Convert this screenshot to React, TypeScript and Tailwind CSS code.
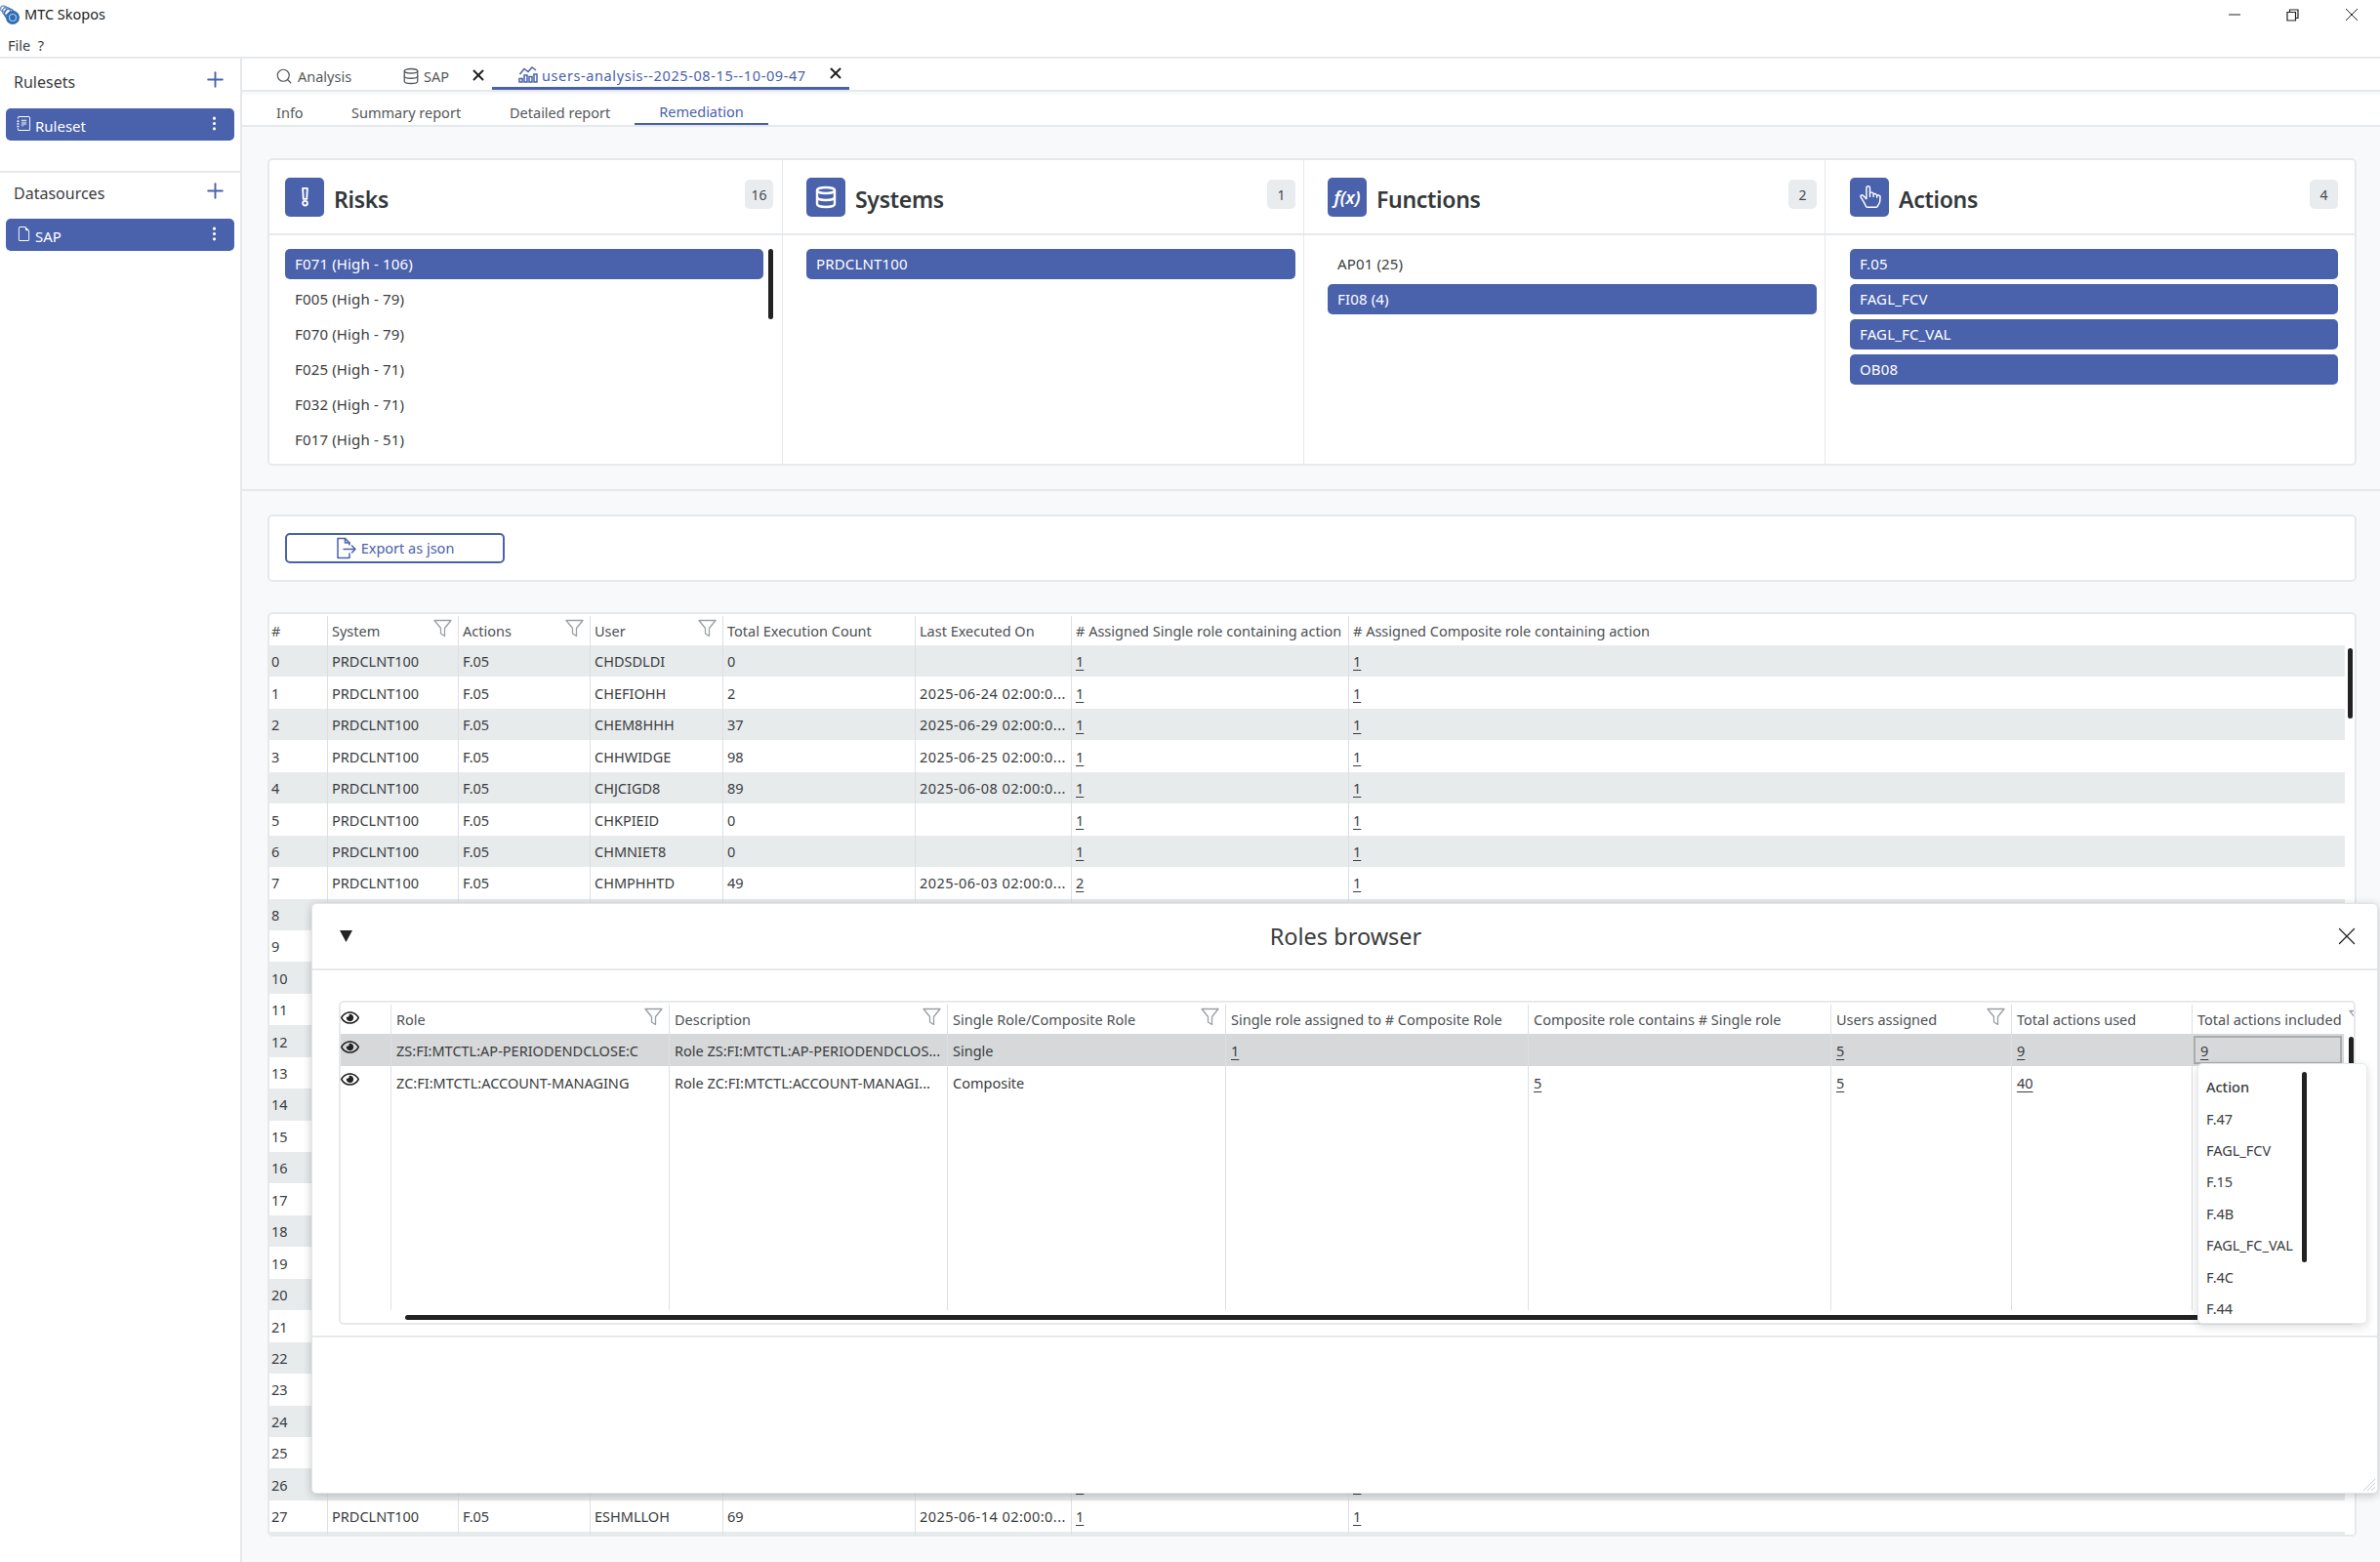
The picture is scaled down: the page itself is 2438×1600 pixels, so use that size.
import { Database, Plus, Search, X } from "lucide-react";
import { BsFileEarmark, BsHandIndexThumb, BsJournalText, BsThreeDotsVertical } from "react-icons/bs";
import { FaRegEye } from "react-icons/fa";

const rows: Record<number, string[]> = {
  0: ["CHDSDLDI", "0", "", "1", "1"],
  1: ["CHEFIOHH", "2", "2025-06-24 02:00:0...", "1", "1"],
  2: ["CHEM8HHH", "37", "2025-06-29 02:00:0...", "1", "1"],
  3: ["CHHWIDGE", "98", "2025-06-25 02:00:0...", "1", "1"],
  4: ["CHJCIGD8", "89", "2025-06-08 02:00:0...", "1", "1"],
  5: ["CHKPIEID", "0", "", "1", "1"],
  6: ["CHMNIET8", "0", "", "1", "1"],
  7: ["CHMPHHTD", "49", "2025-06-03 02:00:0...", "2", "1"],
  26: ["", "", "", "1", "1"],
  27: ["ESHMLLOH", "69", "2025-06-14 02:00:0...", "1", "1"],
};

const mainCols = "grid w-[2126px] grid-cols-[59px_134px_135px_136px_197px_160px_284px_1021px]";
const roleCols = "grid w-[2052px] grid-cols-[51px_285px_285px_285px_310px_310px_185px_185px_156px] [&>div+div]:pl-[5px]";

function Funnel() {
  return (
    <svg width="19" height="19" viewBox="0 0 19 19" fill="none" stroke="#9aa0a4" strokeWidth="1.3" strokeLinejoin="round" className="shrink-0">
      <path d="M1 1.5H18L11.5 9.5V17.5L7.5 15V9.5Z" />
    </svg>
  );
}

function Logo() {
  return (
    <svg width="22" height="22" viewBox="0 0 22 22" className="shrink-0">
      <circle cx="3.5" cy="5" r="3" fill="none" stroke="#7d9cc9" strokeWidth="1.4" />
      <circle cx="6.5" cy="7.5" r="4" fill="none" stroke="#5b83bd" strokeWidth="1.4" />
      <circle cx="9.5" cy="10" r="5" fill="none" stroke="#3d6fb4" strokeWidth="1.4" />
      <circle cx="13" cy="14" r="7" fill="#2f6db5" />
      <circle cx="13" cy="14" r="3.5" fill="none" stroke="#a9cbe9" strokeWidth="1.2" />
    </svg>
  );
}

function ChartIcon() {
  return (
    <svg width="20" height="18" viewBox="0 0 20 18" fill="none" stroke="#4a61ac" strokeWidth="1.5" className="mt-[3px] shrink-0">
      <path d="M1.5 9L6 3.5L10 6.5L14 2L18 5" />
      <rect x="1" y="13.5" width="3" height="3.5" />
      <rect x="6" y="10" width="3" height="7" />
      <rect x="11" y="11.5" width="3" height="5.5" />
      <rect x="16" y="9" width="3" height="8" />
    </svg>
  );
}

function ExportIcon() {
  return (
    <svg width="21" height="23" viewBox="0 0 21 23" fill="none" stroke="#4a61ac" strokeWidth="1.5" strokeLinejoin="round" strokeLinecap="round" className="shrink-0">
      <path d="M14 8V6L9.5 1.5H2V21.5H14V17" />
      <path d="M9.5 1.5V6H14" />
      <path d="M8 12.5H20M16.5 9L20 12.5L16.5 16" />
    </svg>
  );
}

function RiskIcon() {
  return (
    <svg width="11" height="21" viewBox="0 0 14 26" fill="none" stroke="white" strokeWidth="2.4">
      <path d="M4 2H10L9.2 16H4.8Z" strokeLinejoin="round" />
      <circle cx="7" cy="21.5" r="3" />
    </svg>
  );
}

function SideItem({ icon, label }: { icon: React.ReactNode; label: string }) {
  return (
    <div className="mx-[6px] flex h-[33px] items-center rounded-[5px] bg-[#4a61ac] pl-[11px] pr-[12px] text-[15px] text-white">
      <span className="mb-[3px] w-[19px]">{icon}</span>
      <span className="flex-1 pt-[3px]">{label}</span>
      <BsThreeDotsVertical size={17} className="mb-[3px]" />
    </div>
  );
}

function ListItem({ label, active }: { label: string; active?: boolean }) {
  return (
    <div className={active ? "flex h-[31px] items-center rounded-[5px] bg-[#4a61ac] pl-[10px] text-[15px] tracking-[0.15px] text-white" : "flex h-[31px] items-center pl-[10px] text-[15px] tracking-[0.15px] text-[#3a3d40]"}>
      {label}
    </div>
  );
}

function PanelHead({ icon, title, count, pad }: { icon: React.ReactNode; title: string; count: string; pad: string }) {
  return (
    <div className={`flex h-[77px] items-center border-b-2 border-[#e6e9eb] ${pad}`}>
      <div className="flex h-[40px] w-[40px] shrink-0 items-center justify-center rounded-[5px] bg-[#4a61ac] text-white">{icon}</div>
      <div className="ml-[10px] flex-1 pt-[5px] text-[23px] font-semibold leading-none tracking-[-0.3px] text-[#34383b]">{title}</div>
      <div className="mb-[5px] flex h-[30px] min-w-[29px] items-center justify-center rounded-[5px] bg-[#e9ecef] px-[6px] text-[14px] text-[#44484b]">{count}</div>
    </div>
  );
}

function Link({ value }: { value: string }) {
  return <span className="underline underline-offset-[3px]">{value}</span>;
}

function HeadCell({ label, filter, first }: { label: string; filter?: boolean; first?: boolean }) {
  return (
    <div className={first ? "flex h-full items-center justify-between overflow-hidden pl-[2px] pr-[6px]" : "flex h-full items-center justify-between overflow-hidden border-l border-[#dde0e3] pl-[4px] pr-[6px]"}>
      <span className="whitespace-nowrap pt-[1px]">{label}</span>
      {filter && <span className="mb-[6px]"><Funnel /></span>}
    </div>
  );
}

function Cell({ children }: { children?: React.ReactNode }) {
  return <div className="flex items-center overflow-hidden whitespace-nowrap border-l border-[#dde0e3] pl-[4px] pt-[2px]">{children}</div>;
}

function MainTable() {
  const indexes = Array.from({ length: 29 }, (_, i) => i);
  return (
    <div className="relative mt-[31px] h-[947px] overflow-hidden rounded-[5px] border-2 border-[#e6e9eb] bg-white text-[14.5px] text-[#3a3d40]">
      <div className={`${mainCols} h-[32px] pt-[2px] text-[#4c5053]`}>
        <HeadCell label="#" first />
        <HeadCell label="System" filter />
        <HeadCell label="Actions" filter />
        <HeadCell label="User" filter />
        <HeadCell label="Total Execution Count" />
        <HeadCell label="Last Executed On" />
        <HeadCell label="# Assigned Single role containing action" />
        <HeadCell label="# Assigned Composite role containing action" />
      </div>
      {indexes.map((i) => {
        const r = rows[i];
        return (
          <div key={i} className={i % 2 === 0 ? `${mainCols} h-[32.45px] bg-[#e8ebec]` : `${mainCols} h-[32.45px] bg-white`}>
            <div className="flex items-center pl-[2px] pt-[2px]">{i < 28 ? i : ""}</div>
            <Cell>{r && r[0] !== "" ? "PRDCLNT100" : ""}</Cell>
            <Cell>{r && r[0] !== "" ? "F.05" : ""}</Cell>
            <Cell>{r ? r[0] : ""}</Cell>
            <Cell>{r ? r[1] : ""}</Cell>
            <Cell><span className="tracking-[0.45px]">{r ? r[2] : ""}</span></Cell>
            <Cell>{r ? <Link value={r[3]} /> : ""}</Cell>
            <Cell>{r ? <Link value={r[4]} /> : ""}</Cell>
          </div>
        );
      })}
      <div className="absolute left-[2129px] top-[35px] h-[72px] w-[5px] rounded-full bg-[#222]" />
    </div>
  );
}

function RolesWindow() {
  const head = [
    { label: "Role", filter: true },
    { label: "Description", filter: true },
    { label: "Single Role/Composite Role", filter: true },
    { label: "Single role assigned to # Composite Role" },
    { label: "Composite role contains # Single role" },
    { label: "Users assigned", filter: true },
    { label: "Total actions used" },
    { label: "Total actions included" },
  ];
  const actions = ["F.47", "FAGL_FCV", "F.15", "F.4B", "FAGL_FC_VAL", "F.4C", "F.44"];
  return (
    <div className="absolute left-[319px] top-[925px] h-[605px] w-[2117px] rounded-[5px] border border-[#e2e5e7] bg-white text-[14.5px] text-[#3a3d40] shadow-[0_2px_10px_rgba(0,0,0,0.22)]">
      <div className="flex h-[68px] items-center justify-between border-b-2 border-[#e6e9eb] pl-[27px] pr-[16px]">
        <svg width="15" height="14" viewBox="0 0 15 14"><path d="M1 1H14L7.5 13Z" fill="#222" /></svg>
        <div className="ml-[6px] pt-[2px] text-[23.5px] text-[#3a3d40]">Roles browser</div>
        <X size={30} strokeWidth={1} className="text-[#222]" />
      </div>
      <div className="relative ml-[27px] mt-[31px] h-[332px] w-[2066px] overflow-hidden rounded-[5px] border-2 border-[#e6e9eb]">
        <div className={`${roleCols} h-[32px] pt-[2px] text-[#4c5053]`}>
          <div className="pt-[4px]"><FaRegEye size={19} className="text-[#222]" /></div>
          {head.map((h) => (
            <HeadCell key={h.label} label={h.label} filter={h.filter} />
          ))}
        </div>
        <div className={`${roleCols} h-[33px] bg-[#d6d8d9]`}>
          <div className="pt-[4px]"><FaRegEye size={19} className="text-[#222]" /></div>
          <Cell>ZS:FI:MTCTL:AP-PERIODENDCLOSE:C</Cell>
          <Cell>Role ZS:FI:MTCTL:AP-PERIODENDCLOS...</Cell>
          <Cell>Single</Cell>
          <Cell><Link value="1" /></Cell>
          <Cell />
          <Cell><Link value="5" /></Cell>
          <Cell><Link value="9" /></Cell>
          <div className="m-[2px] flex items-center border-2 border-[#a9abac] pt-[2px]"><Link value="9" /></div>
        </div>
        <div className={`${roleCols} h-[33px]`}>
          <div className="pt-[4px]"><FaRegEye size={19} className="text-[#222]" /></div>
          <Cell>ZC:FI:MTCTL:ACCOUNT-MANAGING</Cell>
          <Cell>Role ZC:FI:MTCTL:ACCOUNT-MANAGI...</Cell>
          <Cell>Composite</Cell>
          <Cell />
          <Cell><Link value="5" /></Cell>
          <Cell><Link value="5" /></Cell>
          <Cell><Link value="40" /></Cell>
          <Cell />
        </div>
        <div className={`${roleCols} h-[217px]`}>
          <div />
          <Cell /><Cell /><Cell /><Cell /><Cell /><Cell /><Cell /><Cell />
        </div>
        <div className="absolute left-[2057px] top-[7px]"><Funnel /></div>
        <div className="absolute left-[2057px] top-[35px] h-[36px] w-[5px] rounded-full bg-[#222]" />
        <div className="absolute left-[66px] top-[320px] h-[5px] w-[1900px] rounded-full bg-[#222]" />
      </div>
      <div className="mt-[11px] border-t-2 border-[#e6e9eb]" />
      <div className="absolute left-[1931px] top-[163px] h-[267px] w-[174px] overflow-hidden rounded-[5px] border border-[#e6e9eb] bg-white pl-[8px] pt-[8px] shadow-[0_3px_10px_rgba(0,0,0,0.14)]">
        <div className="flex h-[32.4px] items-center font-medium">Action</div>
        {actions.map((a) => (
          <div key={a} className="flex h-[32.4px] items-center">{a}</div>
        ))}
        <div className="absolute left-[106px] top-[8px] h-[195px] w-[5px] rounded-full bg-[#222]" />
      </div>
      <svg width="14" height="14" viewBox="0 0 14 14" stroke="#c9cccf" strokeWidth="1" className="absolute bottom-[1px] right-[1px]">
        <path d="M1 13L13 1M5 13L13 5M9 13L13 9" />
      </svg>
    </div>
  );
}

export default function App() {
  return (
    <div className="relative h-[1600px] w-[2438px] overflow-hidden bg-white font-['Noto_Sans',sans-serif] text-[#3a3d40]">
      <div className="flex h-[30px] items-center text-[14.5px] text-[#222]">
        <Logo />
        <span className="ml-[3px]">MTC Skopos</span>
        <div className="flex-1" />
        <svg width="12" height="12" viewBox="0 0 12 12" stroke="#222" className="mr-[47px]"><path d="M0 6H12" /></svg>
        <svg width="13" height="13" viewBox="0 0 13 13" fill="none" stroke="#222" strokeWidth="1.2" className="mr-[47px]"><path d="M1 3.5H9.5V12H1ZM3.5 3.5V1H12V9.5H9.5" /></svg>
        <svg width="14" height="14" viewBox="0 0 14 14" stroke="#222" className="mr-[22px]"><path d="M1 1L13 13M13 1L1 13" /></svg>
      </div>
      <div className="flex h-[30px] items-center border-b-2 border-[#e6e9eb] pl-[8px] pt-[5px] text-[14.5px]">File&nbsp;&nbsp;?</div>
      <div className="flex h-[1540px]">
        <div className="w-[248px] shrink-0 border-r-2 border-[#e6e9eb]">
          <div className="h-[117px] border-b-2 border-[#e6e9eb]">
            <div className="flex h-[47px] items-center justify-between pl-[14px] pr-[13px] text-[16px]">
              Rulesets
              <Plus size={25} strokeWidth={1.8} className="mb-[5px] text-[#4a61ac]" />
            </div>
            <div className="mt-[4px]">
              <SideItem icon={<BsJournalText size={15} />} label="Ruleset" />
            </div>
          </div>
          <div className="flex h-[40px] items-center justify-between pl-[14px] pr-[13px] pt-[1px] text-[16px]">
            Datasources
            <Plus size={25} strokeWidth={1.8} className="mb-[5px] text-[#4a61ac]" />
          </div>
          <div className="mt-[7px]">
            <SideItem icon={<BsFileEarmark size={15} />} label="SAP" />
          </div>
        </div>
        <div className="flex-1 bg-[#f8f9fa]">
          <div className="flex h-[34px] border-b-2 border-[#e6e9eb] bg-white pl-[34px] text-[14.5px] text-[#55595c]">
            <div className="flex w-[130px] items-center">
              <Search size={18} strokeWidth={1.6} className="mt-[4px]" />
              <span className="ml-[5px] mt-[6px]">Analysis</span>
            </div>
            <div className="flex w-[92px] items-center">
              <Database size={18} strokeWidth={1.7} className="mt-[4px]" />
              <span className="ml-[4px] mt-[6px] flex-1">SAP</span>
              <X size={18} strokeWidth={2.6} className="mr-[5px] mt-[1px] text-[#222]" />
            </div>
            <div className="flex w-[366px] items-center border-b-[3px] border-[#4a61ac] pl-[27px] text-[#4a61ac]">
              <ChartIcon />
              <span className="ml-[4px] mt-[6px] flex-1 tracking-[0.6px]">users-analysis--2025-08-15--10-09-47</span>
              <X size={18} strokeWidth={2.6} className="mr-[5px] mt-[1px] text-[#222]" />
            </div>
          </div>
          <div className="mt-[3px] flex h-[33px] border-b-2 border-[#e6e9eb] bg-white pl-[35px] text-[14.5px] text-[#55595c]">
            <div className="flex w-[77px] items-center pt-[6px]">Info</div>
            <div className="flex w-[162px] items-center pt-[6px]">Summary report</div>
            <div className="flex w-[128px] items-center pt-[6px]">Detailed report</div>
            <div className="flex w-[137px] items-center justify-center border-b-[2px] border-[#4a61ac] pt-[6px] text-[#4a61ac]">Remediation</div>
          </div>
          <div className="px-[26px] pt-[32px]">
            <div className="grid h-[315px] w-[2140px] grid-cols-[525px_534px_534px_543px] rounded-[5px] border-2 border-[#e6e9eb] bg-white">
              <div>
                <PanelHead pad="pl-[16px] pr-[9px]" icon={<RiskIcon />} title="Risks" count="16" />
                <div className="relative ml-[16px] mr-[9px] mt-[14px] flex flex-col gap-[5px] pr-[10px]">
                  <ListItem label="F071 (High - 106)" active />
                  <ListItem label="F005 (High - 79)" />
                  <ListItem label="F070 (High - 79)" />
                  <ListItem label="F025 (High - 71)" />
                  <ListItem label="F032 (High - 71)" />
                  <ListItem label="F017 (High - 51)" />
                  <div className="absolute right-0 top-0 h-[72px] w-[5px] rounded-full bg-[#222]" />
                </div>
              </div>
              <div className="border-l border-[#e6e9eb]">
                <PanelHead pad="pl-[24px] pr-[8px]" icon={<Database size={24} strokeWidth={2.4} />} title="Systems" count="1" />
                <div className="ml-[24px] mr-[8px] mt-[14px] flex flex-col gap-[5px]">
                  <ListItem label="PRDCLNT100" active />
                </div>
              </div>
              <div className="border-l border-[#e6e9eb]">
                <PanelHead pad="pl-[24px] pr-[8px]" icon={<span className="text-[18px] font-semibold italic leading-none">f(x)</span>} title="Functions" count="2" />
                <div className="ml-[24px] mr-[8px] mt-[14px] flex flex-col gap-[5px]">
                  <ListItem label="AP01 (25)" />
                  <ListItem label="FI08 (4)" active />
                </div>
              </div>
              <div className="border-l border-[#e6e9eb]">
                <PanelHead pad="pl-[25px] pr-[17px]" icon={<BsHandIndexThumb size={23} />} title="Actions" count="4" />
                <div className="ml-[25px] mr-[17px] mt-[14px] flex flex-col gap-[5px]">
                  <ListItem label="F.05" active />
                  <ListItem label="FAGL_FCV" active />
                  <ListItem label="FAGL_FC_VAL" active />
                  <ListItem label="OB08" active />
                </div>
              </div>
            </div>
          </div>
          <div className="mt-[24px] border-t-2 border-[#e6e9eb]" />
          <div className="px-[26px] pt-[24px]">
            <div className="flex h-[69px] w-[2140px] items-center rounded-[5px] border-2 border-[#e6e9eb] bg-white pl-[16px]">
              <button className="flex h-[31px] w-[225px] items-center justify-center gap-[5px] rounded-[5px] border-2 border-[#4a61ac] text-[14.5px] text-[#4a61ac]">
                <ExportIcon />
                Export as json
              </button>
            </div>
            <div className="w-[2140px]">
              <MainTable />
            </div>
          </div>
        </div>
      </div>
      <RolesWindow />
    </div>
  );
}
